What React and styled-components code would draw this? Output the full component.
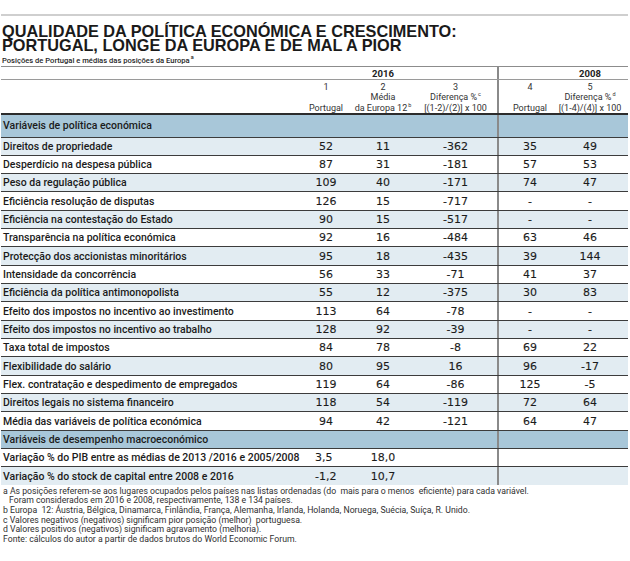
import React from 'react';
import styled, { createGlobalStyle } from 'styled-components';

const Global = createGlobalStyle`
  html, body { margin: 0; padding: 0; background: #ffffff; }
  body { font-family: Roboto, "Liberation Sans", Arial, sans-serif; color: #1c1c1c; }
`;

const COLS = '299px 52px 62px 83px 64px 58px 9px';

const Page = styled.div`
  width: 627px;
  margin-left: 1px;
  padding-top: 14px;
`;

const TopRule = styled.div`
  height: 2px;
  background: #cfcfcf;
`;

const Title = styled.h1`
  margin: 8px 0 0 1px;
  font-family: "Liberation Sans", Arial, sans-serif;
  font-weight: 700;
  font-size: 16.3px;
  line-height: 14px;
  color: #1a1a1a;
`;

const Subtitle = styled.div`
  margin: 3px 0 0 1px;
  font-size: 7.6px;
  line-height: 11px;
  font-weight: 500;
  color: #262626;
`;

const Sup = styled.sup`
  font-size: 5.5px;
  line-height: 0;
  vertical-align: 4px;
  margin-left: 1px;
`;

const Table = styled.div`
  border-top: 1px solid #8c8c8c;
`;

const Grid = styled.div`
  display: grid;
  grid-template-columns: ${COLS};
  box-sizing: border-box;
`;

const YearRow = styled(Grid)`
  height: 13px;
  border-bottom: 1px solid #9a9a9a;
  font-size: 9.5px;
  font-weight: 700;
  color: #222;
`;

const HeadRow = styled(Grid)`
  height: 33px;
  font-size: 9px;
  color: #333;
`;

const DataRow = styled(Grid)`
  height: ${p => (p.$section ? 23.5 : 18.33)}px;
  border-top: ${p => (p.$section ? 2 : 1)}px solid ${p => (p.$section ? '#2c2c2c' : '#3c3c3c')};
  background: ${p => (p.$tone === 'section' ? '#a8c7d9' : p.$tone === 'light' ? '#e2ecf2' : '#ffffff')};
  font-size: 10.5px;
  font-weight: 500;
  color: #1b1b1b;
`;

const Cell = styled.div`
  box-sizing: border-box;
  display: flex;
  align-items: center;
  justify-content: ${p => (p.$left ? 'flex-start' : 'center')};
  padding-left: ${p => p.$pad || 0}px;
  border-left: ${p => (p.$div ? '2px solid #8a8a8a' : 'none')};
  white-space: nowrap;
`;

const Num = styled(Cell)`
  font-family: "DejaVu Sans", Verdana, sans-serif;
  font-size: 11px;
  font-weight: 400;
  -webkit-text-stroke: 0.12px #1b1b1b;
`;

const Label = styled(Cell)`
  justify-content: flex-start;
  padding-left: 2px;
  grid-column: ${p => (p.$span ? `span ${p.$span}` : 'auto')};
`;

const HeadCell = styled.div`
  box-sizing: border-box;
  display: flex;
  flex-direction: column;
  align-items: center;
  padding-top: 2px;
  border-left: ${p => (p.$div ? '2px solid #8a8a8a' : 'none')};
  white-space: nowrap;
`;

const HeadLine = styled.div`
  height: 10.3px;
  line-height: 10.3px;
`;

const Notes = styled.div`
  margin-top: 2px;
  padding-left: 2px;
  font-size: 8.7px;
  line-height: 9.6px;
  color: #2f2f2f;
`;

const Note = styled.div`
  white-space: pre;
  padding-left: ${p => (p.$indent ? 6 : 0)}px;
`;

const rows = [
  ['Direitos de propriedade', '52', '11', '-362', '35', '49'],
  ['Desperdício na despesa pública', '87', '31', '-181', '57', '53'],
  ['Peso da regulação pública', '109', '40', '-171', '74', '47'],
  ['Eficiência resolução de disputas', '126', '15', '-717', '-', '-'],
  ['Eficiência na contestação do Estado', '90', '15', '-517', '-', '-'],
  ['Transparência na política económica', '92', '16', '-484', '63', '46'],
  ['Protecção dos accionistas minoritários', '95', '18', '-435', '39', '144'],
  ['Intensidade da concorrência', '56', '33', '-71', '41', '37'],
  ['Eficiência da política antimonopolista', '55', '12', '-375', '30', '83'],
  ['Efeito dos impostos no incentivo ao investimento', '113', '64', '-78', '-', '-'],
  ['Efeito dos impostos no incentivo ao trabalho', '128', '92', '-39', '-', '-'],
  ['Taxa total de impostos', '84', '78', '-8', '69', '22'],
  ['Flexibilidade do salário', '80', '95', '16', '96', '-17'],
  ['Flex. contratação e despedimento de empregados', '119', '64', '-86', '125', '-5'],
  ['Direitos legais no sistema financeiro', '118', '54', '-119', '72', '64'],
  ['Média das variáveis de política económica', '94', '42', '-121', '64', '47'],
];

const macro = [
  ['Variação % do PIB entre as médias de 2013 /2016 e 2005/2008', '3,5', '18,0'],
  ['Variação % do stock de capital entre 2008 e 2016', '-1,2', '10,7'],
];

function Section({ title, first }) {
  return (
    <DataRow $tone="section" $section={first}>
      <Label $span={4}>{title}</Label>
      <Cell $div />
      <Cell />
      <Cell />
    </DataRow>
  );
}

export default function App() {
  return (
    <>
      <Global />
      <Page>
        <TopRule />
        <Title>
          QUALIDADE DA POLÍTICA ECONÓMICA E CRESCIMENTO:
          <br />
          PORTUGAL, LONGE DA EUROPA E DE MAL A PIOR
        </Title>
        <Subtitle>
          Posições de Portugal e médias das posições da Europa<Sup>a</Sup>
        </Subtitle>
        <Table>
          <YearRow>
            <Cell />
            <Cell />
            <Cell>2016</Cell>
            <Cell />
            <Cell $div />
            <Cell>2008</Cell>
            <Cell />
          </YearRow>
          <HeadRow>
            <HeadCell />
            <HeadCell>
              <HeadLine>1</HeadLine>
              <HeadLine />
              <HeadLine>Portugal</HeadLine>
            </HeadCell>
            <HeadCell>
              <HeadLine>2</HeadLine>
              <HeadLine>Média</HeadLine>
              <HeadLine>
                da Europa 12<Sup>b</Sup>
              </HeadLine>
            </HeadCell>
            <HeadCell>
              <HeadLine>3</HeadLine>
              <HeadLine>
                Diferença %<Sup>c</Sup>
              </HeadLine>
              <HeadLine>[(1-2)/(2)] x 100</HeadLine>
            </HeadCell>
            <HeadCell $div>
              <HeadLine>4</HeadLine>
              <HeadLine />
              <HeadLine>Portugal</HeadLine>
            </HeadCell>
            <HeadCell>
              <HeadLine>5</HeadLine>
              <HeadLine>
                Diferença %<Sup>d</Sup>
              </HeadLine>
              <HeadLine>[(1-4)/(4)] x 100</HeadLine>
            </HeadCell>
            <HeadCell />
          </HeadRow>

          <Section title="Variáveis de política económica" first />
          {rows.map((r, i) => (
            <DataRow key={r[0]} $tone={i % 2 === 0 ? 'light' : 'white'}>
              <Label>{r[0]}</Label>
              <Num>{r[1]}</Num>
              <Num>{r[2]}</Num>
              <Num>{r[3]}</Num>
              <Num $div>{r[4]}</Num>
              <Num>{r[5]}</Num>
              <Cell />
            </DataRow>
          ))}
          <Section title="Variáveis de desempenho macroeconómico" />
          {macro.map((r, i) => (
            <DataRow key={r[0]} $tone={i % 2 === 0 ? 'white' : 'light'}>
              <Label>{r[0]}</Label>
              <Num $left $pad={15}>{r[1]}</Num>
              <Num>{r[2]}</Num>
              <Cell />
              <Cell $div />
              <Cell />
              <Cell />
            </DataRow>
          ))}
        </Table>
        <Notes>
          <Note>a As posições referem-se aos lugares ocupados pelos países nas listas ordenadas (do  mais para o menos  eficiente) para cada variável.</Note>
          <Note $indent>Foram considerados em 2016 e 2008, respectivamente, 138 e 134 países.</Note>
          <Note>b Europa  12: Áustria, Bélgica, Dinamarca, Finlândia, França, Alemanha, Irlanda, Holanda, Noruega, Suécia, Suíça, R. Unido.</Note>
          <Note>c Valores negativos (negativos) significam pior posição (melhor)  portuguesa.</Note>
          <Note>d Valores positivos (negativos) significam agravamento (melhoria).</Note>
          <Note>Fonte: cálculos do autor a partir de dados brutos do World Economic Forum.</Note>
        </Notes>
      </Page>
    </>
  );
}
